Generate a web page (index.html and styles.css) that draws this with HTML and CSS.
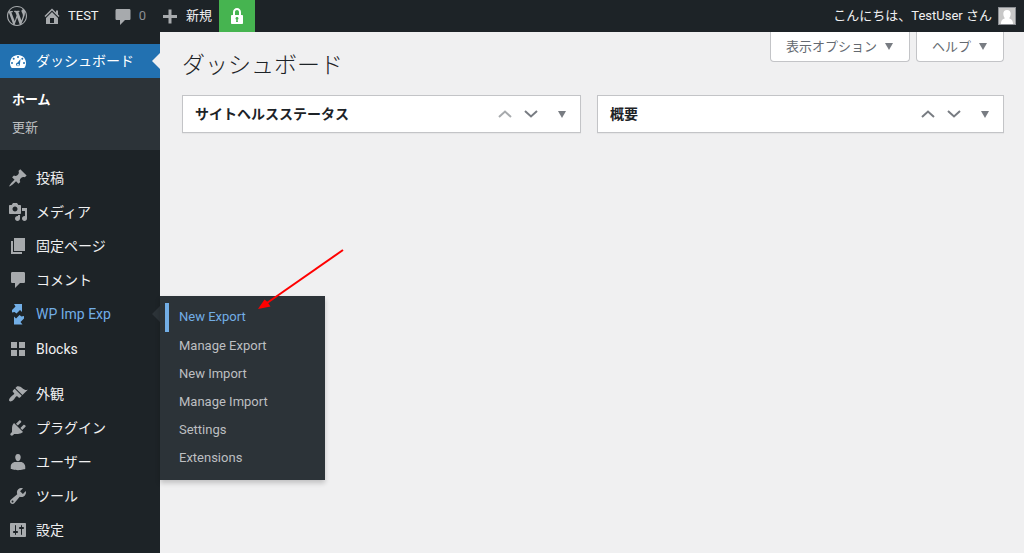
FILE: index.html
```html
<!DOCTYPE html>
<html lang="ja">
<head>
<meta charset="utf-8">
<meta name="viewport" content="width=device-width, initial-scale=1">
<title>ダッシュボード</title>
<link rel="stylesheet" href="styles.css">
</head>
<body>
<header class="adminbar">
  <a class="bar-item bar-logo" href="#" aria-label="WordPress"><svg class="icon" viewBox="0 0 20 20"><path d="M20 10c0-5.51-4.49-10-10-10C4.48 0 0 4.49 0 10c0 5.52 4.48 10 10 10 5.51 0 10-4.48 10-10zM7.78 15.37L4.37 6.22c.55-.02 1.17-.08 1.17-.08.5-.06.44-1.13-.06-1.11 0 0-1.45.11-2.37.11-.18 0-.37 0-.58-.01C4.12 2.69 6.87 1.11 10 1.11c2.33 0 4.45.87 6.05 2.34-.68-.11-1.65.39-1.65 1.58 0 .74.45 1.36.9 2.1.35.61.55 1.36.55 2.46 0 1.49-1.4 5-1.4 5l-3.03-8.37c.54-.02.82-.17.82-.17.5-.05.44-1.25-.06-1.22 0 0-1.44.12-2.38.12-.87 0-2.33-.12-2.33-.12-.5-.03-.56 1.2-.06 1.22l.92.08 1.26 3.41zM17.41 10c.24-.64.74-1.87.43-4.25.7 1.29 1.05 2.71 1.05 4.25 0 3.29-1.73 6.24-4.4 7.78.97-2.59 1.94-5.2 2.92-7.78zM6.1 18.09C3.12 16.65 1.11 13.53 1.11 10c0-1.3.23-2.48.72-3.59C3.25 10.3 4.67 14.2 6.1 18.09zm4.03-6.63l2.58 6.98c-.86.29-1.76.45-2.71.45-.79 0-1.57-.11-2.29-.33.81-2.38 1.62-4.74 2.42-7.1z"/></svg></a>
  <a class="bar-item" href="#"><svg class="icon" viewBox="0 0 20 20"><path d="M16 8.5l1.53 1.53-1.06 1.06L10 4.6l-6.47 6.49-1.06-1.06L10 2.5l4 4v-2h2v4zm-6-2.46l6 5.99V18H4v-5.97zM12 17v-5H8v5h4z"/></svg>TEST</a>
  <a class="bar-item bar-muted" href="#"><svg class="icon" viewBox="0 0 20 20"><path d="M4 3h12c1 0 1.500.5 1.500 1.500v8c0 1-.5 1.500-1.500 1.500h-4l-5 5v-5H4c-1 0-1.500-.5-1.500-1.500v-8C2.500 3.500 3 3 4 3z"/></svg>0</a>
  <a class="bar-item" href="#"><svg class="icon" viewBox="0 0 20 20"><path d="M17 9v3h-5.500v5.500h-3V12H3V9h5.500V3.500h3V9z"/></svg>新規</a>
  <a class="bar-item bar-lock" href="#" aria-label="SSL"><svg class="icon" viewBox="0 0 20 20"><path d="M14 9h1c.55 0 1 .45 1 1v7c0 .55-.45 1-1 1H5c-.55 0-1-.45-1-1v-7c0-.55.45-1 1-1h1V6c0-2.210 1.790-4 4-4s4 1.790 4 4v3zm-2 0V6c0-1.100-.9-2-2-2s-2 .9-2 2v3h4zm-1 7l-.36-2.150c.51-.24.86-.75.86-1.350 0-.83-.67-1.500-1.500-1.500s-1.500.67-1.500 1.500c0 .6.35 1.110.86 1.350L9 16h2z"/></svg></a>
  <a class="bar-item bar-user" href="#">こんにちは、TestUser さん<svg class="avatar" viewBox="0 0 18 18"><path class="avatar-edge" d="M0 0h18v18H0z"/><path class="avatar-bg" d="M1 1h16v16H1z"/><path class="avatar-body" d="M9 3c2.500 0 3.700 1.500 3.700 3.700S11.500 11 11 11.300c2 .8 4 1.700 4 5.700H3c0-4 2-4.900 4-5.700C6.500 11 5.300 9 5.300 6.700S6.500 3 9 3z"/></svg></a>
</header>
<div class="layout">
  <nav class="menu" aria-label="メインメニュー">
    <ul class="menu-list">
      <li class="menu-item menu-current">
        <a class="menu-link" href="#"><svg class="icon" viewBox="0 0 20 20"><path d="M3.760 17h12.480c1.100-1.370 1.760-3.110 1.760-5 0-4.420-3.580-8-8-8s-8 3.580-8 8c0 1.890.66 3.630 1.760 5z"/><g class="gauge"><circle cx="10" cy="6" r="1"/><circle cx="5.700" cy="7.800" r="1"/><circle cx="14.300" cy="7.800" r="1"/><circle cx="4" cy="12" r="1"/><circle cx="16" cy="12" r="1"/><path d="M12.500 8l-.6 5.600c-.1 2.200-3.600 2.200-3.900 0-.1-1.300.7-2 1.700-2.200zM10 13a.9.9 0 1 0 .01 0z" fill-rule="evenodd"/></g></svg>ダッシュボード</a>
        <ul class="submenu">
          <li><a class="submenu-link submenu-current" href="#">ホーム</a></li>
          <li><a class="submenu-link" href="#">更新</a></li>
        </ul>
      </li>
      <li class="menu-item menu-group"><a class="menu-link" href="#"><svg class="icon" viewBox="0 0 20 20"><path d="M10.440 3.020l1.820-1.820 6.360 6.350-1.830 1.820c-1.050-.68-2.480-.57-3.410.36l-.75.75c-.92.93-1.040 2.350-.35 3.410l-1.830 1.820-2.410-2.410-2.800 2.790c-.42.42-3.380 2.710-3.800 2.290s1.860-3.390 2.280-3.810l2.790-2.790L4.100 9.360l1.830-1.820c1.050.69 2.480.57 3.400-.36l.75-.75c.93-.92 1.050-2.350.36-3.410z"/></svg>投稿</a></li>
      <li class="menu-item"><a class="menu-link" href="#"><svg class="icon" viewBox="0 0 20 20"><path d="M13 11V4c0-.55-.45-1-1-1h-1.670L9 1H5L3.670 3H2c-.55 0-1 .45-1 1v7c0 .55.45 1 1 1h10c.55 0 1-.45 1-1zM7 4.500c1.380 0 2.500 1.120 2.500 2.500S8.380 9.500 7 9.500 4.500 8.380 4.500 7 5.620 4.500 7 4.500zM14 6h5v10.500c0 1.380-1.120 2.500-2.500 2.500S14 17.880 14 16.500s1.120-2.500 2.500-2.500c.17 0 .34.02.5.05V9h-3V6zm-4 8.050V13h2v3.500c0 1.380-1.120 2.500-2.500 2.500S7 17.880 7 16.500 8.120 14 9.500 14c.17 0 .34.02.5.05z"/></svg>メディア</a></li>
      <li class="menu-item"><a class="menu-link" href="#"><svg class="icon" viewBox="0 0 20 20"><path d="M6 15V2h11v13H6zm-1 1h9v2H3V5h2v11z"/></svg>固定ページ</a></li>
      <li class="menu-item"><a class="menu-link" href="#"><svg class="icon" viewBox="0 0 20 20"><path d="M4.500 2h11c1 0 1.500.5 1.500 1.500v8c0 1-.5 1.500-1.500 1.500H12l-5 5v-5H4.500C3.500 13 3 12.500 3 11.500v-8C3 2.500 3.500 2 4.500 2z"/></svg>コメント</a></li>
      <li class="menu-item menu-open">
        <a class="menu-link" href="#"><svg class="icon" viewBox="0 0 20 20"><path d="M6 0h8v8l-2-2-3.500 3.500L6.500 8 4 8.500V6l3.500-3.500zM6 20.500v-8l2 2 3.500-3.500 2 1.500 2.500-.5v2.500L12.500 18l2 2.500z"/></svg>WP Imp Exp</a>
        <ul class="flyout">
          <li><a class="flyout-link flyout-current" href="#">New Export</a></li>
          <li><a class="flyout-link" href="#">Manage Export</a></li>
          <li><a class="flyout-link" href="#">New Import</a></li>
          <li><a class="flyout-link" href="#">Manage Import</a></li>
          <li><a class="flyout-link" href="#">Settings</a></li>
          <li><a class="flyout-link" href="#">Extensions</a></li>
        </ul>
      </li>
      <li class="menu-item"><a class="menu-link" href="#"><svg class="icon" viewBox="0 0 20 20"><path d="M3 3h6v6H3zM11 3h6v6h-6zM3 11h6v6H3zM11 11h6v6h-6z"/></svg>Blocks</a></li>
      <li class="menu-item menu-group"><a class="menu-link" href="#"><svg class="icon" viewBox="0 0 20 20"><path d="M14.480 11.060L7.410 3.990l1.500-1.500c.5-.56 2.300-.47 3.510.32 1.210.8 1.430 1.280 2.910 2.100 1.180.64 2.450 1.260 4.450.85zm-.71.71L6.700 4.700 4.930 6.470c-.39.39-.39 1.020 0 1.410l1.060 1.060c.39.39.39 1.030 0 1.420-.6.6-1.430 1.110-2.210 1.690-.35.26-.7.53-1.010.84C1.430 14.230.4 16.080 1.400 17.070c.99 1 2.840-.03 4.180-1.360.31-.31.58-.66.85-1.020.57-.78 1.080-1.610 1.690-2.210.39-.39 1.020-.39 1.410 0l1.060 1.060c.39.39 1.020.39 1.410 0z"/></svg>外観</a></li>
      <li class="menu-item"><a class="menu-link" href="#"><svg class="icon" viewBox="0 0 20 20"><path d="M13.110 4.360L9.870 7.600 8 5.730l3.240-3.240c.35-.34 1.050-.2 1.560.32.52.51.66 1.210.31 1.550zm-8 1.770l.91-1.120 9.010 9.010-1.190.84c-.71.71-2.630 1.160-3.820 1.160H6.140L4.900 17.260c-.59.59-1.540.59-2.120 0-.59-.58-.59-1.530 0-2.120l1.240-1.240v-3.880c0-1.130.4-3.190 1.090-3.890zm7.260 3.970l3.240-3.240c.34-.35 1.040-.21 1.550.31.52.51.66 1.210.31 1.550l-3.240 3.250z"/></svg>プラグイン</a></li>
      <li class="menu-item"><a class="menu-link" href="#"><svg class="icon" viewBox="0 0 20 20"><path d="M10 9.250c-2.270 0-2.730-3.440-2.730-3.440C7 4.020 7.820 2 9.970 2c2.160 0 2.980 2.020 2.710 3.810 0 0-.41 3.440-2.680 3.440zM7.280 10h5.440c2.390 0 4.520 2.330 4.520 4.530v2.490s-3.650 1.130-7.240 1.130c-3.650 0-7.240-1.130-7.240-1.130v-2.490c0-2.250 1.940-4.530 4.520-4.530z"/></svg>ユーザー</a></li>
      <li class="menu-item"><a class="menu-link" href="#"><svg class="icon" viewBox="0 0 20 20"><path d="M16.680 9.770c-1.340 1.340-3.300 1.670-4.950.99l-5.410 6.520c-.99.99-2.590.99-3.580 0s-.99-2.590 0-3.570l6.520-5.420c-.68-1.650-.35-3.610.99-4.950 1.280-1.280 3.120-1.620 4.720-1.060l-2.890 2.890 2.820 2.820 2.860-2.870c.53 1.580.18 3.390-1.080 4.650zM3.810 16.210c.4.39 1.040.39 1.430 0 .4-.4.4-1.040 0-1.430-.39-.4-1.030-.4-1.430 0-.39.39-.39 1.030 0 1.430z"/></svg>ツール</a></li>
      <li class="menu-item"><a class="menu-link" href="#"><svg class="icon" viewBox="0 0 20 20"><path d="M18 16V4c0-.55-.45-1-1-1H3c-.55 0-1 .45-1 1v12c0 .55.45 1 1 1h14c.55 0 1-.45 1-1zM8 11h1c.55 0 1 .45 1 1s-.45 1-1 1H8v1.500c0 .28-.22.5-.5.5s-.5-.22-.5-.5V13H6c-.55 0-1-.45-1-1s.45-1 1-1h1V5.500c0-.28.22-.5.5-.5s.5.22.5.5V11zm5-2h-1c-.55 0-1-.45-1-1s.45-1 1-1h1V5.500c0-.28.22-.5.5-.5s.5.22.5.5V7h1c.55 0 1 .45 1 1s-.45 1-1 1h-1v5.500c0 .28-.22.5-.5.5s-.5-.22-.5-.5V9z"/></svg>設定</a></li>
    </ul>
  </nav>
  <main class="content">
    <div class="page-head">
      <h1 class="page-title">ダッシュボード</h1>
      <div class="screen-meta">
        <button class="meta-button" type="button">表示オプション<span class="caret"></span></button>
        <button class="meta-button" type="button">ヘルプ<span class="caret"></span></button>
      </div>
    </div>
    <div class="boxes">
      <section class="box">
        <h2 class="box-title">サイトヘルスステータス</h2>
        <button class="box-button" type="button" aria-label="上に移動" disabled><svg class="chevron" viewBox="0 0 14 8"><path d="M1 7l6-5.500L13 7"/></svg></button>
        <button class="box-button" type="button" aria-label="下に移動"><svg class="chevron" viewBox="0 0 14 8"><path d="M1 1l6 5.500L13 1"/></svg></button>
        <button class="box-button box-toggle" type="button" aria-label="パネルを切り替え"><span class="caret"></span></button>
      </section>
      <section class="box">
        <h2 class="box-title">概要</h2>
        <button class="box-button" type="button" aria-label="上に移動"><svg class="chevron" viewBox="0 0 14 8"><path d="M1 7l6-5.500L13 7"/></svg></button>
        <button class="box-button" type="button" aria-label="下に移動"><svg class="chevron" viewBox="0 0 14 8"><path d="M1 1l6 5.500L13 1"/></svg></button>
        <button class="box-button box-toggle" type="button" aria-label="パネルを切り替え"><span class="caret"></span></button>
      </section>
    </div>
    <svg class="pointer" viewBox="0 0 88 62"><path class="pointer-line" d="M85 2L9 55"/><path class="pointer-head" d="M0 61l6.500-9.500 2.500 2 3.500 5z"/></svg>
  </main>
</div>
</body>
</html>
```
FILE: styles.css
```css
* { box-sizing: border-box; }

body {
  margin: 0;
  min-height: 100vh;
  display: flex;
  flex-direction: column;
  background: #f0f0f1;
  color: #1d2327;
  font: 400 13px/20px Roboto, "Noto Sans CJK JP", sans-serif;
}

a { color: inherit; text-decoration: none; }
ul { list-style: none; margin: 0; padding: 0; }
button { font: inherit; color: inherit; margin: 0; padding: 0; border: 0; background: none; }

.icon { width: 20px; height: 20px; flex: none; fill: #a7aaad; }

.adminbar {
  display: flex;
  height: 32px;
  background: #1d2327;
  color: #f0f0f1;
}
.bar-item { display: flex; align-items: center; gap: 6px; padding: 0 7px; white-space: nowrap; }
.bar-logo { padding-right: 8px; }
.bar-muted { color: #8c8f94; }
.bar-lock { padding: 0 8px; background: #46b450; }
.bar-lock .icon { fill: #fff; }
.bar-user { margin-left: auto; padding-right: 8px; }
.avatar { width: 18px; height: 18px; }
.avatar-edge { fill: #8c8f94; }
.avatar-bg { fill: #c8c8c8; }
.avatar-body { fill: #fff; }

.layout { display: flex; flex: 1; }

.menu { width: 160px; flex: none; padding-top: 12px; background: #1d2327; color: #f0f0f1; }
.menu-item { position: relative; }
.menu-group { margin-top: 11px; }
.menu-link {
  position: relative;
  display: flex;
  align-items: center;
  gap: 8px;
  padding: 7px 8px;
  font-size: 14px;
}
.menu-current > .menu-link { background: #2271b1; color: #fff; }
.menu-current .icon { fill: #fff; }
.menu-current .gauge { fill: #2271b1; }
.menu-current > .menu-link::after,
.menu-open > .menu-link::after {
  content: "";
  position: absolute;
  right: 0;
  top: 9px;
  border: 8px solid transparent;
  border-left: 0;
  border-right-color: #f0f0f1;
}
.menu-open { padding-bottom: 1px; }
.menu-open > .menu-link { color: #72aee6; }
.menu-open .icon { fill: #72aee6; overflow: visible; }
.menu-open > .menu-link::after { border-right-color: #2c3338; }

.submenu { padding: 8px 0; background: #2c3338; }
.submenu-link { display: block; padding: 4px 12px; color: #bdbfc1; }
.submenu-current { color: #fff; font-weight: 700; }

.flyout {
  position: absolute;
  left: 100%;
  top: -1px;
  z-index: 2;
  width: 165px;
  padding: 7px 0 8px;
  background: #2c3338;
  box-shadow: 0 3px 5px rgba(0, 0, 0, .2);
}
.flyout-link { display: block; margin-left: 5px; padding: 4px 14px; color: #bdbfc1; }
.flyout-current { padding: 4px 10px 5px; border-left: 4px solid #72aee6; color: #72aee6; }

.content { position: relative; flex: 1; padding: 0 20px 0 22px; }
.page-head { display: flex; justify-content: space-between; align-items: flex-start; }
.page-title { margin: 0; padding: 18px 0 13px; font-size: 23px; line-height: 32px; font-weight: 300; }
.screen-meta { display: flex; gap: 6px; }
.meta-button {
  display: flex;
  align-items: center;
  gap: 8px;
  height: 30px;
  padding: 0 16px 0 15px;
  border: 1px solid #c3c4c7;
  border-top: 0;
  border-radius: 0 0 4px 4px;
  background: #fff;
  color: #646970;
}
.caret { border: 4px solid transparent; border-top: 7px solid #787c82; border-bottom: 0; }

.boxes { display: grid; grid-template-columns: 49fr 50fr; gap: 16px; }
.box {
  display: flex;
  align-items: center;
  height: 38px;
  border: 1px solid #c3c4c7;
  background: #fff;
  box-shadow: 0 1px 1px rgba(0, 0, 0, .04);
}
.box-title { flex: 1; margin: 0; padding-left: 12px; font-size: 14px; font-weight: 600; }
.box-button { display: grid; place-items: center; width: 26px; height: 36px; }
.box-toggle { width: 36px; }
.chevron { width: 14px; height: 8px; fill: none; stroke: #787c82; stroke-width: 2; overflow: visible; }
.box-button:disabled .chevron { stroke: #a7aaad; }

/* Callout arrow over the page, aimed at the first flyout entry */
.pointer { position: absolute; left: 98px; top: 216px; z-index: 3; width: 88px; height: 62px; }
.pointer-line { fill: none; stroke: #f00; stroke-width: 2; }
.pointer-head { fill: #f00; }
```
